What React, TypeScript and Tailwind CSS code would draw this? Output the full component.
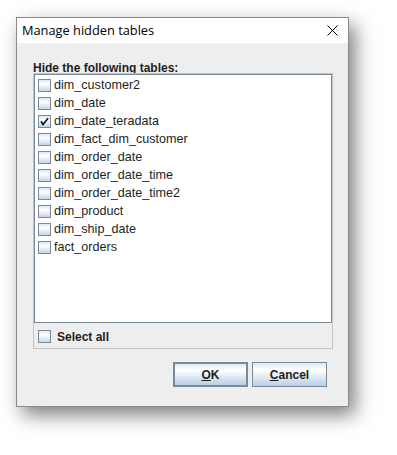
import React from "react";

const items: { name: string; checked: boolean }[] = [
  { name: "dim_customer2", checked: false },
  { name: "dim_date", checked: false },
  { name: "dim_date_teradata", checked: true },
  { name: "dim_fact_dim_customer", checked: false },
  { name: "dim_order_date", checked: false },
  { name: "dim_order_date_time", checked: false },
  { name: "dim_order_date_time2", checked: false },
  { name: "dim_product", checked: false },
  { name: "dim_ship_date", checked: false },
  { name: "fact_orders", checked: false },
];

function Box({ checked }: { checked?: boolean }) {
  return (
    <div className="relative w-[13px] h-[13px] shrink-0 border border-[#7a8a99] bg-[linear-gradient(180deg,#dde8f3_0%,#ffffff_35%,#c4d7ea_100%)]">
      {checked && (
        <svg className="absolute left-0 top-0" width="11" height="11" viewBox="0 0 11 11">
          <polyline points="2.5,6 4,8.5 8.5,3" fill="none" stroke="#1c1c1c" strokeWidth="1.8" strokeLinecap="square" />
        </svg>
      )}
    </div>
  );
}

export default function App() {
  return (
    <div className="w-[397px] h-[455px] bg-white pt-[17px] pl-[16px] font-['Liberation_Sans',Arial,sans-serif] text-[#1e1e1e]">
      <div className="w-[333px] h-[390px] border border-[#8a8a8a] bg-[#eeeeee] flex flex-col shadow-[6px_8px_18px_rgba(0,0,0,0.5)]">
        <div className="h-[25px] bg-white flex items-center justify-between pl-[5px] pr-[10px]">
          <span className="font-['Open_Sans',sans-serif] text-[12.8px] text-black">Manage hidden tables</span>
          <svg width="11" height="11" viewBox="0 0 11 11">
            <path d="M0.5 0.5 L10.5 10.5 M10.5 0.5 L0.5 10.5" stroke="#000" strokeWidth="1" />
          </svg>
        </div>
        <div className="flex-1 flex flex-col pl-[16px] pr-[15px] pt-[18px]">
          <div className="h-[12px] leading-[14px] text-[12px] font-bold">Hide the following tables:</div>
          <div className="h-[276px] border border-[#c4c4c4] flex flex-col">
            <div className="h-[249px] border border-[#7a8a99] bg-white pt-[1px] pl-[3px]">
              {items.map((it) => (
                <div key={it.name} className="h-[18px] flex items-start">
                  <div className="mt-[3px]">
                    <Box checked={it.checked} />
                  </div>
                  <span className="ml-[3px] text-[12.6px] leading-[19px]">{it.name}</span>
                </div>
              ))}
            </div>
            <div className="flex-1 flex items-start pl-[4px] pt-[7px]">
              <Box />
              <span className="ml-[6px] text-[12px] font-bold leading-[14px]">Select all</span>
            </div>
          </div>
          <div className="mt-[13px] flex justify-end gap-[4px] mr-[6px]">
            <button className="w-[75px] h-[25px] border-2 border-[#7a8a99] bg-[linear-gradient(180deg,#dde8f3_0%,#ffffff_30%,#b8cfe5_100%)] text-[12px] font-bold text-[#1e1e1e] flex items-center justify-center">
              <span><span className="underline">O</span>K</span>
            </button>
            <button className="w-[75px] h-[25px] border border-[#7a8a99] bg-[linear-gradient(180deg,#dde8f3_0%,#ffffff_30%,#b8cfe5_100%)] text-[12px] font-bold text-[#1e1e1e] flex items-center justify-center">
              <span><span className="underline">C</span>ancel</span>
            </button>
          </div>
        </div>
      </div>
    </div>
  );
}
